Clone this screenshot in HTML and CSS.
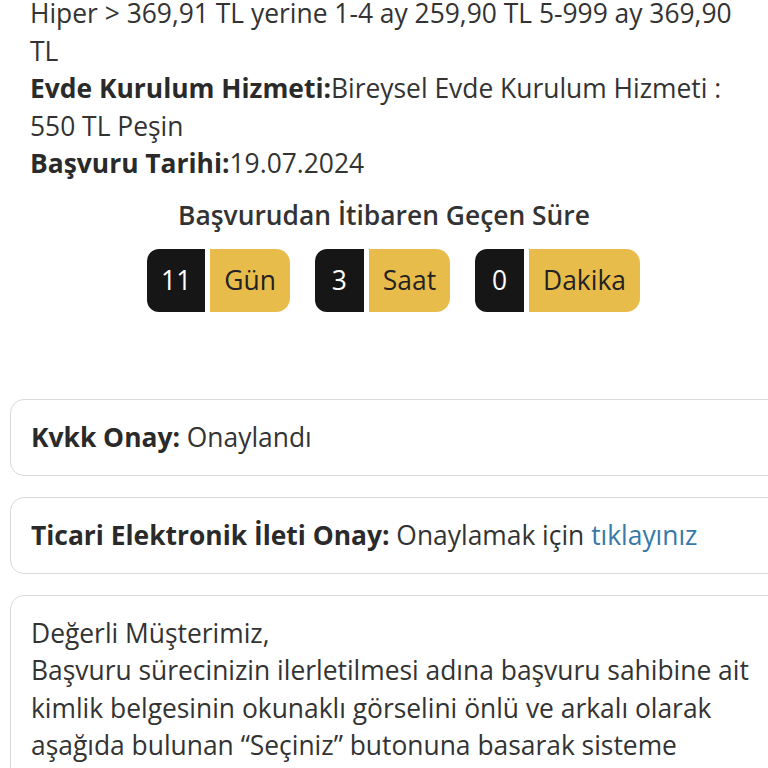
FILE: index.html
```html
<!DOCTYPE html>
<html lang="tr">
<head>
    <meta charset="UTF-8">
    <meta name="viewport" content="width=device-width, initial-scale=1.0">
    <title>Başvuru Detayı</title>
    <link rel="stylesheet" href="styles.css">
</head>
<body>

    <!-- Basvuru Bilgileri -->
    <div class="info">
        <p>Hiper &gt; 369,91 TL yerine 1-4 ay 259,90 TL 5-999 ay 369,90 TL</p>
        <p><b>Evde Kurulum Hizmeti:</b>Bireysel Evde Kurulum Hizmeti : 550 TL Peşin</p>
        <p><b>Başvuru Tarihi:</b>19.07.2024</p>
    </div>

    <!-- Gecen Sure -->
    <div class="elapsed">
        <h3>Başvurudan İtibaren Geçen Süre</h3>
        <div class="timer">
            <div class="timer-item">
                <span class="num">11</span>
                <span class="unit">Gün</span>
            </div>
            <div class="timer-item">
                <span class="num">3</span>
                <span class="unit">Saat</span>
            </div>
            <div class="timer-item">
                <span class="num">0</span>
                <span class="unit">Dakika</span>
            </div>
        </div>
    </div>

    <!-- Onay Kutulari -->
    <div class="approvals">
        <div class="card">
            <b>Kvkk Onay:</b> Onaylandı
        </div>
        <div class="card">
            <b>Ticari Elektronik İleti Onay:</b> Onaylamak için <a href="#">tıklayınız</a>
        </div>
        <div class="card">
            Değerli Müşterimiz,<br>
            Başvuru sürecinizin ilerletilmesi adına başvuru sahibine ait kimlik belgesinin okunaklı görselini önlü ve arkalı olarak aşağıda bulunan “Seçiniz” butonuna basarak sisteme yüklemenizi rica ederiz.
        </div>
    </div>

</body>
</html>
```

FILE: styles.css
```css
body {
    margin: 0;
    font-family: "Open Sans", "Noto Sans", sans-serif;
    font-size: 26.4px;
    line-height: 37.5px;
    color: #333;
    background-color: #fff;
    overflow: hidden;
}

/* Basvuru bilgileri */
.info {
    padding: 0 28px 0 30px;
    margin-top: -5px;
}

.info p {
    margin: 0;
}

.info b {
    color: #2a2a2a;
}

/* Gecen sure */
.elapsed {
    margin-top: 14px;
    text-align: center;
}

.elapsed h3 {
    margin: 0;
    font-size: 26.4px;
    font-weight: 600;
    line-height: 37.5px;
}

.timer {
    display: flex;
    justify-content: center;
    gap: 25px;
    margin-top: 15px;
    padding-left: 19px;
}

.timer-item {
    display: flex;
    gap: 5px;
    height: 63px;
}

.timer-item span {
    display: flex;
    align-items: center;
    justify-content: center;
    padding: 0 14px;
}

.timer-item .num {
    min-width: 21px;
    background-color: #161616;
    color: #fff;
    border-radius: 12px 0 0 12px;
}

.timer-item .unit {
    background-color: #e8bc4b;
    color: #222;
    border-radius: 0 14px 14px 0;
}

/* Onay kutulari */
.approvals {
    display: flex;
    flex-direction: column;
    gap: 21.5px;
    margin: 87px -20px 0 10px;
}

.card {
    padding: 18.5px 20px;
    border: 1.5px solid #d9d9d9;
    border-radius: 14px;
}

.card b {
    color: #2a2a2a;
}

.card a {
    color: #3779a8;
    text-decoration: none;
}
```
